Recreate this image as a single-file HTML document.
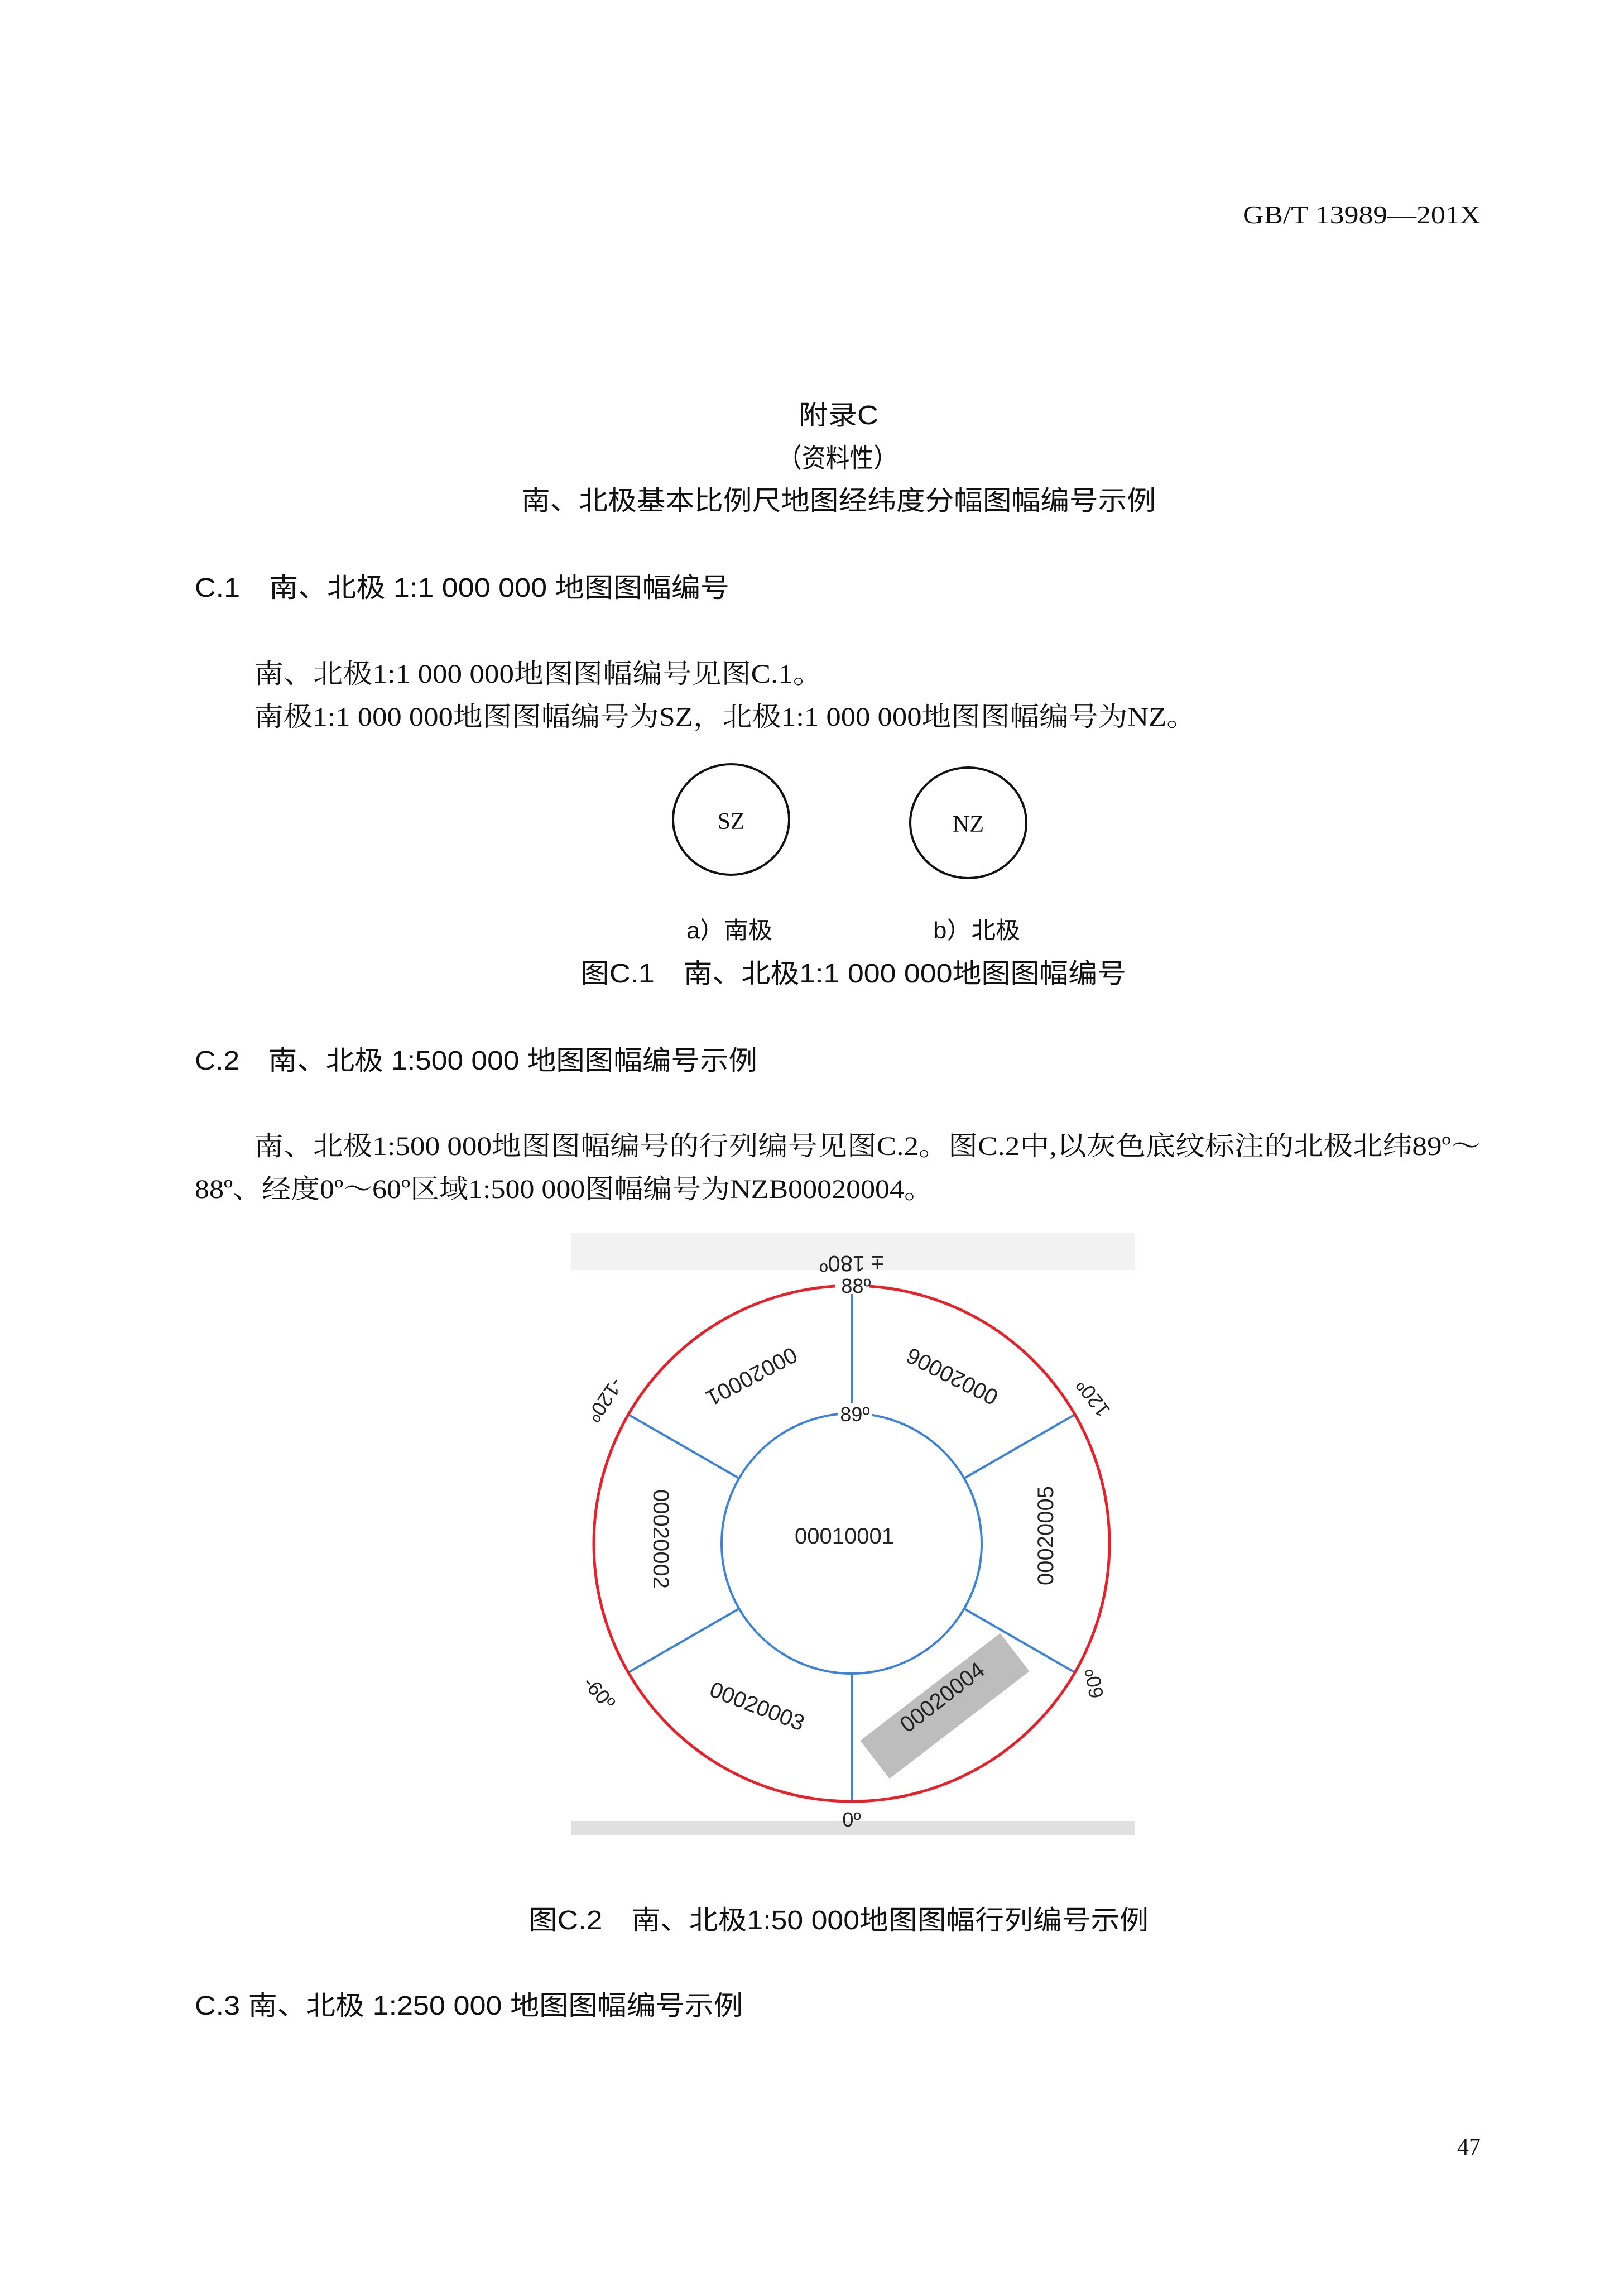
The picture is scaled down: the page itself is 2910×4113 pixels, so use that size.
<!DOCTYPE html>
<html><head><meta charset="utf-8"><style>
html,body{margin:0;padding:0;background:#fff}
svg{display:block}
.s{font-family:"Liberation Sans","Noto Sans CJK SC",sans-serif;fill:#111}
.r{font-family:"Liberation Serif","Noto Serif CJK SC",serif;fill:#111}
.a{font-family:"Liberation Sans",sans-serif;fill:#222}
</style></head><body>
<svg width="2910" height="4113" viewBox="0 0 2910 4113" xmlns="http://www.w3.org/2000/svg">
<rect width="2910" height="4113" fill="#fff"/>
<text class="r" x="2227" y="400" font-size="46" textLength="426" lengthAdjust="spacingAndGlyphs">GB/T 13989—201X</text>
<text class="s" x="1431" y="760" font-size="48" textLength="143" lengthAdjust="spacingAndGlyphs">附录C</text>
<text class="s" x="1394" y="837" font-size="48" textLength="214" lengthAdjust="spacingAndGlyphs">（资料性）</text>
<text class="s" x="934" y="913" font-size="48" textLength="1137" lengthAdjust="spacingAndGlyphs">南、北极基本比例尺地图经纬度分幅图幅编号示例</text>
<text class="s" x="349" y="1069" font-size="48" textLength="958" lengthAdjust="spacingAndGlyphs">C.1　南、北极 1:1 000 000 地图图幅编号</text>
<text class="r" x="455" y="1223" font-size="48" textLength="1019" lengthAdjust="spacingAndGlyphs">南、北极1:1 000 000地图图幅编号见图C.1。</text>
<text class="r" x="455" y="1300" font-size="48" textLength="1688" lengthAdjust="spacingAndGlyphs">南极1:1 000 000地图图幅编号为SZ，北极1:1 000 000地图图幅编号为NZ。</text>
<ellipse cx="1310" cy="1468" rx="104" ry="99" fill="none" stroke="#111" stroke-width="4"/>
<ellipse cx="1735" cy="1474" rx="104" ry="99" fill="none" stroke="#111" stroke-width="4"/>
<text class="r" x="1310" y="1485" font-size="42" text-anchor="middle">SZ</text>
<text class="r" x="1735" y="1490" font-size="42" text-anchor="middle">NZ</text>
<text class="s" x="1230" y="1681" font-size="42" textLength="154" lengthAdjust="spacingAndGlyphs">a）南极</text>
<text class="s" x="1672" y="1681" font-size="42" textLength="156" lengthAdjust="spacingAndGlyphs">b）北极</text>
<text class="s" x="1040" y="1760" font-size="48" textLength="978" lengthAdjust="spacingAndGlyphs">图C.1　南、北极1:1 000 000地图图幅编号</text>
<text class="s" x="349" y="1916" font-size="48" textLength="1008" lengthAdjust="spacingAndGlyphs">C.2　南、北极 1:500 000 地图图幅编号示例</text>
<text class="r" x="455" y="2069" font-size="48" textLength="2198" lengthAdjust="spacingAndGlyphs">南、北极1:500 000地图图幅编号的行列编号见图C.2。图C.2中,以灰色底纹标注的北极北纬89º～</text>
<text class="r" x="349" y="2146" font-size="48" textLength="1323" lengthAdjust="spacingAndGlyphs">88º、经度0º～60º区域1:500 000图幅编号为NZB00020004。</text>
<!-- diagram -->
<rect x="1024" y="2209" width="1010" height="1079" fill="#fff"/>
<rect x="1024" y="2209" width="1010" height="66" fill="#f2f2f2"/>
<rect x="1024" y="3262" width="1010" height="26" fill="#e0e0e0"/>
<g stroke="#3b82e0" stroke-width="4" fill="none">
<circle cx="1526" cy="2765" r="233"/>
<line x1="1526" y1="2303" x2="1526" y2="2532"/>
<line x1="1526" y1="2998" x2="1526" y2="3227"/>
<line x1="1126" y1="2534" x2="1324" y2="2648"/>
<line x1="1926" y1="2534" x2="1728" y2="2648"/>
<line x1="1126" y1="2996" x2="1324" y2="2882"/>
<line x1="1926" y1="2996" x2="1728" y2="2882"/>
</g>
<circle cx="1526" cy="2765" r="462" fill="none" stroke="#e8202a" stroke-width="5"/>
<g transform="translate(1693,3056) rotate(-37.5)"><rect x="-158" y="-43" width="316" height="86" fill="#bdbdbd"/></g>
<g class="a" font-size="40" text-anchor="middle">
<text transform="translate(1526,2250) rotate(180)">± 180º</text>
<rect x="1496" y="2282" width="62" height="36" fill="#fff"/>
<text x="1534" y="2316" font-size="36">88º</text>
<rect x="1502" y="2514" width="60" height="36" fill="#fff"/>
<text x="1532" y="2546" font-size="36">89º</text>
<text x="1513" y="2765" font-size="40">00010001</text>
<text transform="translate(1347,2466) rotate(152)" dy="14">00020001</text>
<text transform="translate(1706,2466) rotate(207)" dy="14">00020006</text>
<text transform="translate(1185,2757) rotate(90)" dy="14">00020002</text>
<text transform="translate(1873,2751) rotate(-90)" dy="14">00020005</text>
<text transform="translate(1357,3056) rotate(21)" dy="14">00020003</text>
<text transform="translate(1688,3040) rotate(-37.5)" dy="14">00020004</text>
<text transform="translate(1958,2505) rotate(233)" dy="13" font-size="36">120º</text>
<text transform="translate(1085,2508) rotate(124)" dy="13" font-size="36">-120º</text>
<text transform="translate(1960,3016) rotate(-100)" dy="13" font-size="36">60º</text>
<text transform="translate(1074,3032) rotate(49)" dy="13" font-size="36">-60º</text>
<text x="1526" y="3272" font-size="36">0º</text>
</g>
<text class="s" x="947" y="3456" font-size="48" textLength="1111" lengthAdjust="spacingAndGlyphs">图C.2　南、北极1:50 000地图图幅行列编号示例</text>
<text class="s" x="349" y="3609" font-size="48" textLength="982" lengthAdjust="spacingAndGlyphs">C.3 南、北极 1:250 000 地图图幅编号示例</text>
<text class="r" x="2611" y="3860" font-size="44" textLength="42" lengthAdjust="spacingAndGlyphs">47</text>
</svg>
</body></html>
